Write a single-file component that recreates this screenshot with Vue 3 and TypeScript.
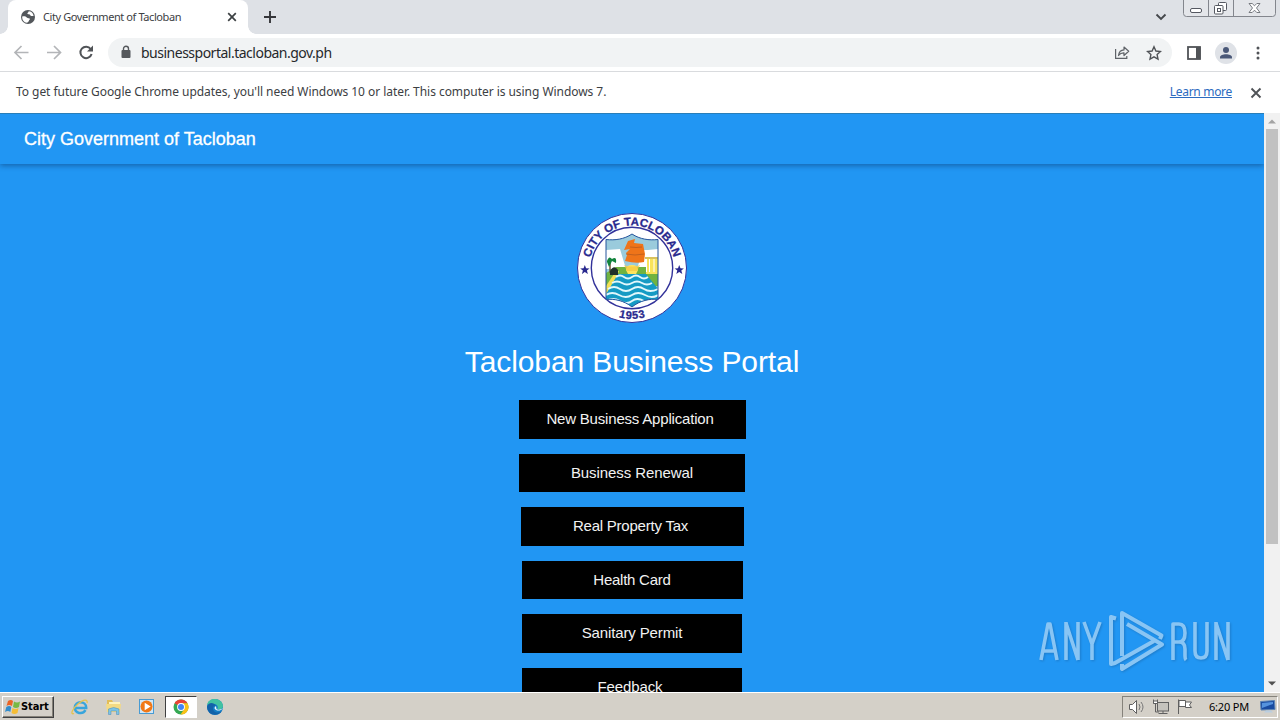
<script setup lang="ts">
interface PortalLink {
  label: string
  width: number
  shift: number
  spacing: number
}

const links: PortalLink[] = [
  { label: 'New Business Application', width: 227, shift: -4, spacing: -0.19 },
  { label: 'Business Renewal', width: 226, shift: 0, spacing: -0.08 },
  { label: 'Real Property Tax', width: 223, shift: -3, spacing: -0.22 },
  { label: 'Health Card', width: 221, shift: 0, spacing: -0.25 },
  { label: 'Sanitary Permit', width: 220, shift: 0, spacing: -0.12 },
  { label: 'Feedback', width: 220, shift: -4, spacing: -0.12 },
]
</script>

<template>
  <div class="screen">
    <div class="tabstrip">
      <div class="tab">
        <svg class="globe" width="16" height="16" viewBox="0 0 16 16">
          <circle cx="8" cy="8" r="7" fill="#53575b" />
          <path d="M2.200 7.500C4 6.800 5.800 7.200 6.800 8.400c.9 1 2.400.3 3 1.400.4 1-.7 1.200-1 2.200-.2.8-1 1.600-2 1.800C4 13.500 2 11 2.200 7.500zM8.600 2.300c.3.900-.8 1.200-1.200 1.900-.4.800.8 1.100 1.700 1.100 1 0 .9 1.400 2 1.700.9.200 1.600-.4 2.500.1C13.300 4.300 11.200 2.300 8.600 2.300z" fill="#fff" />
        </svg>
        <span class="tab-title">City Government of Tacloban</span>
        <svg class="tab-close" width="10" height="10" viewBox="0 0 10 10"><path d="M1.200 1.200l7.600 7.600M8.800 1.200L1.200 8.800" stroke="#3c4043" stroke-width="1.700" /></svg>
      </div>
      <svg class="plus" width="14" height="14" viewBox="0 0 14 14"><path d="M7 1v12M1 7h12" stroke="#35363a" stroke-width="1.900" /></svg>
      <svg class="chevron" width="12" height="8" viewBox="0 0 12 8"><path d="M1.500 1.500L6 6l4.500-4.500" fill="none" stroke="#45484c" stroke-width="1.900" /></svg>
      <svg class="winctl" width="94" height="18" viewBox="0 0 94 18">
        <path d="M.5 0v13.500q0 3 3 3h86q3 0 3-3V0M25.500 0v16M50.500 0v16" fill="#e4e6ea" stroke="#83868d" />
        <rect x="7.500" y="8.500" width="11" height="4" rx="1.500" fill="#fff" stroke="#555861" />
        <rect x="35.500" y="2.500" width="8" height="8" rx="1" fill="#fff" stroke="#555861" />
        <rect x="31.500" y="5.500" width="8.500" height="8.500" rx="1" fill="#fff" stroke="#555861" />
        <rect x="34.500" y="8.500" width="3" height="3" fill="#fff" stroke="#555861" />
        <path d="M66 3.500h3.200l2.300 2.300 2.300-2.300H77L73.500 8l3.500 4.500h-3.200l-2.300-2.300-2.300 2.300H66L69.500 8z" fill="#fff" stroke="#6b6e75" stroke-width=".9" />
      </svg>
    </div>

    <div class="toolbar">
      <svg class="nav" width="100" height="20" viewBox="0 0 100 20" fill="none">
        <path d="M21.500 9.500H8.500M14.500 3L8 9.500l6.500 6.500" stroke="#b3b5b8" stroke-width="1.700" />
        <path d="M40 9.500h13M47 3l6.500 6.500-6.500 6.500" stroke="#b3b5b8" stroke-width="1.700" />
        <path d="M83.700 6A5.700 5.700 0 1 0 84.600 11" stroke="#505357" stroke-width="2" />
        <path d="M86 2.500v6h-6z" fill="#505357" />
      </svg>
      <div class="omnibox">
        <svg class="lock" width="10" height="14" viewBox="0 0 10 14"><rect x=".5" y="5" width="9" height="8" rx="1" fill="#55585c" /><path d="M2.500 5.500V3.700a2.500 2.500 0 0 1 5 0v1.800" fill="none" stroke="#55585c" stroke-width="1.400" /></svg>
        <span class="url">businessportal.tacloban.gov.ph</span>
        <svg class="share" width="16" height="16" viewBox="0 0 16 16" fill="none" stroke="#5f6368" stroke-width="1.200"><path d="M1.600 4v9.400h11.200V11" /><path d="M4.500 10.500C5 7 7.200 5 10 4.900V2l4.700 4.300L10 10.500V7.800C7.800 7.700 6 8.500 4.500 10.500z" stroke-linejoin="round" /></svg>
        <svg class="star" width="16" height="16" viewBox="0 0 16 16"><path d="M8 1.800l1.900 4.200 4.600.5-3.400 3.100.9 4.500-4-2.300-4 2.300.9-4.500L1.500 6.500 6.100 6z" fill="none" stroke="#505357" stroke-width="1.400" /></svg>
      </div>
      <svg class="panel" width="14" height="14" viewBox="0 0 14 14"><rect x="1" y="1" width="12" height="12" fill="#fff" stroke="#505357" stroke-width="1.800" /><path d="M9 1h4.500v12H9z" fill="#505357" /></svg>
      <svg class="avatar" width="22" height="22" viewBox="0 0 22 22"><circle cx="11" cy="11" r="11" fill="#dfe2e7" /><circle cx="11" cy="8" r="3" fill="#4a5878" /><path d="M5 16.500v-1.200c0-4 12-4 12 0v1.200z" fill="#4a5878" /></svg>
      <svg class="kebab" width="4" height="14" viewBox="0 0 4 14" fill="#505357"><circle cx="2" cy="2" r="1.500" /><circle cx="2" cy="7" r="1.500" /><circle cx="2" cy="12" r="1.500" /></svg>
    </div>

    <div class="infobar">
      <span class="info-text">To get future Google Chrome updates, you'll need Windows 10 or later. This computer is using Windows 7.</span>
      <span class="learn">Learn more</span>
      <svg class="info-close" width="12" height="12" viewBox="0 0 12 12"><path d="M1.500 1.500l9 9M10.500 1.500l-9 9" stroke="#505357" stroke-width="1.900" /></svg>
    </div>

    <div class="viewport">
      <div class="page">
        <header class="site-header"><span>City Government of Tacloban</span></header>
        <main class="content">
          <svg class="seal" width="112" height="112" viewBox="0 0 112 112">
            <defs>
              <path id="arcTop" d="M14.620 67.090A42.800 42.800 0 1 1 97.380 67.090" />
              <path id="arcBottom" d="M5 56a51 51 0 0 0 102 0" />
              <clipPath id="shield"><path d="M30 27.500c9 1 18-.2 26-5.500 8 5.300 17 6.500 26 5.500v60c-8-1-18 1-26 7.500-8-6.500-18-8.500-26-7.500z" /></clipPath>
            </defs>
            <circle cx="56" cy="56" r="54.500" fill="#fff" stroke="#32329a" />
            <circle cx="56" cy="56" r="40.700" fill="#fff" stroke="#32329a" stroke-width="1.400" />
            <g clip-path="url(#shield)">
              <path d="M29 21h54v75H29z" fill="#9acbdc" />
              <path d="M30 38l14-1 6 20H30zM82 37l-10 1h-5l-6 19h21z" fill="#fff" />
              <path d="M30 61l10-6h33l9 6v13H30z" fill="#70b340" />
              <path d="M30 88V74l10-15h3L32 88z" fill="#f2df55" />
              <path d="M42 62h28l13 16v18H29V84z" fill="#159bc4" />
              <g fill="none" stroke="#e2f8fc" stroke-width="1.900">
                <path d="M40 65q4-3 8 0t8 0 8 0 8 0" /><path d="M36 71q5-3 10 0t10 0 10 0 10 0" />
                <path d="M32 77q6-4 12 0t12 0 12 0 14 0" /><path d="M30 83q6-4 13 0t13 0 13 0 13 0" />
                <path d="M30 89q7-4 14 0t12 0 12 0 14 0" />
              </g>
              <path d="M50 58q0-5 6-5t6 5l-2 4h-8z" fill="#ffe45c" /><path d="M48 53l3 6h10l3-6q-8 3-16 0z" fill="#f6c73f" opacity=".7" />
              <path d="M52 29l7-2-1 4 9 1 2 10-1 8q-8 2-19-1l2-6-1-2 4-4-6 1z" fill="#ef7419" />
              <path d="M50 42q9 2 18 0M54 35q6 1 12 0" fill="none" stroke="#b75a20" stroke-width=".8" />
              <path d="M34 61V50" stroke="#705535" stroke-width="1.500" /><path d="M31 49q2-6 5-2 5-3 4 4l-4-2-3 6-2-5z" fill="#13843e" />
              <path d="M34 63v-4q4-7 8-1v5z" fill="#203029" />
              <path d="M70 46h12v16H70z" fill="#f8e35b" /><path d="M70.500 46v14M73.500 46v14M78 46v14" stroke="#fff" /><path d="M69 47h13v-2H69z" fill="#d8c25d" />
            </g>
            <path d="M30 27.500c9 1 18-.2 26-5.500 8 5.300 17 6.500 26 5.500v60c-8-1-18 1-26 7.500-8-6.500-18-8.500-26-7.500z" fill="none" stroke="#24549c" />
            <g fill="#29298e">
              <path d="M8.800 53l1.300 3.200 3.400.2-2.600 2.200 1 3.300-3.100-1.800-2.900 1.800 1-3.300-2.700-2.200 3.400-.2zM103.200 53l1.300 3.200 3.400.2-2.600 2.200 1 3.300-3.100-1.800-2.900 1.800 1-3.300-2.700-2.200 3.400-.2z" />
              <text class="seal-text"><textPath href="#arcTop" startOffset="50%" text-anchor="middle" textLength="113">CITY OF TACLOBAN</textPath></text>
              <text class="seal-text year"><textPath href="#arcBottom" startOffset="50%" text-anchor="middle" textLength="27">1953</textPath></text>
            </g>
          </svg>
          <h1 class="title">Tacloban Business Portal</h1>
          <nav class="links">
            <a v-for="link in links" :key="link.label" class="link" :style="{ width: link.width + 'px' }">
              <span :style="{ marginLeft: link.shift + 'px', letterSpacing: link.spacing + 'px' }">{{ link.label }}</span>
            </a>
          </nav>
        </main>
      </div>
      <div class="scrollbar">
        <svg width="16" height="16" viewBox="0 0 16 16"><path d="M4 10.500l4-4 4 4z" fill="#a3a3a3" /></svg>
        <div class="thumb"></div>
        <svg width="16" height="17" viewBox="0 0 16 17"><path d="M4 6.500l4 4 4-4z" fill="#505050" /></svg>
      </div>
      <svg class="watermark" width="204" height="72" viewBox="0 0 204 72" fill="none">
        <g stroke-linejoin="round" stroke-width="3.600">
          <path d="M8 55l7-36h2l7 36M10.500 46h11M33 55V17M33 18l12 37M45 17v38M51 17l8 22 8-22M59 38v17" />
          <path d="M140 55V19h6q6 0 6 9t-6 9h-6M146 37q6 0 6 7v7q0 3 1 4M162 17v29q0 7 6 7t6-7V17M183 55V17M183 18l12 37M195 17v38" />
          <path d="M83 13.500L78 12v47l4-1 39-22" stroke-width="4" />
          <path d="M89 51V8l39.500 22.500L127 34" stroke-width="4" />
          <path d="M94 19l35 20.500L89 64v-5" stroke-width="4" />
        </g>
      </svg>
    </div>

    <div class="taskbar">
      <div class="start">
        <svg width="17" height="16" viewBox="0 0 17 16"><path d="M4 2q3-2 5 0L8 7Q5 5 2.500 7z" fill="#eb6424" /><path d="M10 2.500q3 2 6 0L15 8q-3 2-6 0z" fill="#78b943" /><path d="M2.300 8q3-2 5 0l-1 5Q4 11 1 13z" fill="#328dcc" /><path d="M8.500 9q3 2 6 0l-1 5q-3 2-6 0z" fill="#f5bd34" /></svg>
        <span>Start</span>
      </div>
      <svg class="task ie" width="18" height="18" viewBox="0 0 18 18" fill="none"><path d="M14.500 12.200C11.500 17 3.800 15.500 3.800 9.600c0-7 11.400-7 11.400 0v.3H5" stroke="#38a5dc" stroke-width="2.500" /><path d="M3 15.500C-1 17 1 11 7 6s10-5 9-1" stroke="#e5c34f" stroke-width="1.300" /></svg>
      <svg class="task explorer" width="18" height="18" viewBox="0 0 18 18"><path d="M2 2h5l1 2h7v9H2z" fill="#e2bd58" /><path d="M4 4h11v7H4z" fill="#fff3bd" /><path d="M1 6h15l-1 8H2z" fill="#f4da83" /><path d="M3.500 16.500V11q5-3 10.500 0v5.500h-2.500V13H6v3.500z" fill="#7cc4e6" stroke="#4b8bb5" stroke-width=".5" /></svg>
      <svg class="task media" width="18" height="18" viewBox="0 0 18 18"><rect x="1.500" y="1.500" width="14" height="14" fill="#d2e7f5" stroke="#489bd3" /><circle cx="8.500" cy="8.500" r="6" fill="#f17816" /><path d="M6.700 4.800l6 3.700-6 3.700z" fill="#fff" /></svg>
      <div class="active-task">
        <svg width="16" height="16" viewBox="0 0 16 16"><circle cx="8" cy="8" r="7.500" fill="#35a853" /><path d="M8 8L1.500 4.200A7.500 7.500 0 0 1 14.500 4.200H8z" fill="#e94335" /><path d="M8 4.200h6.500A7.500 7.500 0 0 1 7.500 15.500L11.300 10z" fill="#fbc116" /><circle cx="8" cy="8" r="3.900" fill="#fff" /><circle cx="8" cy="8" r="3" fill="#4285f4" /></svg>
      </div>
      <svg class="task edge" width="18" height="18" viewBox="0 0 18 18"><circle cx="9" cy="9" r="8" fill="#147dc5" /><path d="M1.200 7C2-1 16-1 17 8c0 3-3 4-6 3 2-2 0-5-3-5S3 6 1.200 7z" fill="#41c2a2" /><path d="M1 9c1-5 7-5 9-1-3-1-4 3-2 5s5 2 8 0c-3 5-14 6-15-4z" fill="#1262a9" /><path d="M10 8c-2 1-2 3 0 4s5 1 7-2c-2 2-6 2-6.500 1z" fill="#e8f7ff" /></svg>
      <div class="tray">
        <svg width="68" height="18" viewBox="0 0 68 18" fill="#fff" stroke="#606060" stroke-width="1">
          <path d="M1.500 6.500h3l4-4v13l-4-4h-3z" /><path d="M11 6q2 3 0 6M13 4q4 5 0 10" fill="none" stroke="#777" />
          <rect x="29.500" y="4.500" width="11" height="8.500" fill="#c5c3bd" /><path d="M35 13v2.500M30.500 15.500h9" fill="none" /><path d="M25.500 1.500v4h4v-4M27.500 6v8H31" fill="none" /><path d="M25.500 3h4v2.500h-4z" />
          <path d="M50.500 16V1.500M51 2.500h6.500v1.500h6l-2 3 2 2.500h-6V8.500H51z" /><path d="M57.500 3v6" />
        </svg>
        <span class="time">6:20 PM</span>
        <svg class="desktop" width="18" height="15" viewBox="0 0 18 15"><path d="M1.500 2.500l14-1 .5 9-14 .5z" fill="#194ba0" stroke="#5e86b5" /><path d="M3 4l11-1v2L3 9z" fill="#5593dd" /><path d="M7 11.500h5l2 2H5z" fill="#b8cde1" /></svg>
      </div>
    </div>
  </div>
</template>

<style>
body { margin: 0; overflow: hidden; }
</style>

<style scoped>
.screen { width: 1280px; height: 720px; overflow: hidden; display: flex; flex-direction: column; font-family: "Noto Sans", "DejaVu Sans", sans-serif; background: #fff; color: #3c4043; }
.screen * { box-sizing: border-box; }
svg { display: block; flex: none; }
span { white-space: nowrap; }
.tabstrip { height: 34px; flex: none; background: #dee1e6; display: flex; }
.tab { width: 240px; height: 34px; margin-left: 8px; background: #fff; border-radius: 8px 8px 0 0; display: flex; align-items: center; position: relative; }
.tab::before, .tab::after { content: ""; position: absolute; bottom: 0; width: 8px; height: 8px; }
.tab::before { left: -8px; background: radial-gradient(circle at 0 0, transparent 7.500px, #fff 8px); }
.tab::after { right: -8px; background: radial-gradient(circle at 100% 0, transparent 7.500px, #fff 8px); }
.globe { margin-left: 12px; }
.tab-title { margin-left: 7px; margin-top: -1px; width: 138px; font-size: 11px; letter-spacing: -0.41px; }
.tab-close { margin-left: 46px; }
.plus { margin: 10px 0 0 15px; }
.chevron { margin: 13px 0 0 auto; }
.winctl { margin-left: 16px; margin-right: 3px; }
.toolbar { height: 38px; flex: none; display: flex; align-items: center; border-bottom: 1px solid #d9dbde; }
.nav { margin-left: 7px; margin-right: 1px; }
.omnibox { width: 1064px; height: 29px; border-radius: 15px; background: #f1f3f4; display: flex; align-items: center; }
.lock { margin-left: 13px; margin-top: -2px; }
.url { margin-left: 10px; font-size: 14px; letter-spacing: -0.5px; color: #26282b; }
.share { margin-left: auto; }
.star { margin: 0 10px 0 16px; }
.panel { margin-left: 15px; }
.avatar { margin-left: 14px; }
.kebab { margin-left: 19px; }
.infobar { height: 41px; flex: none; display: flex; align-items: center; padding: 0 18px 2px 16px; font-size: 12px; }
.info-text { letter-spacing: -0.05px; }
.learn { margin-left: auto; color: #2c6bc0; text-decoration: underline; letter-spacing: -0.3px; }
.info-close { margin-left: 18px; margin-top: 2px; }
.viewport { height: 579px; flex: none; display: flex; overflow: hidden; position: relative; font-family: "Liberation Sans", Arial, sans-serif; }
.page { width: 1264px; height: 579px; background: #2196f3; overflow: hidden; }
.site-header { height: 51px; border-top: 1px solid #287eb9; display: flex; align-items: center; padding-left: 24px; color: #fff; font-size: 18px; -webkit-text-stroke: 0.3px #fff; box-shadow: 0 2px 5px rgba(0, 30, 70, 0.38); }
.content { display: flex; flex-direction: column; align-items: center; padding-top: 48px; color: #fff; }
.seal-text { font: bold 11.5px "Liberation Sans", Arial, sans-serif; stroke: #29298e; stroke-width: 0.3px; }
.year { font-size: 11px; }
.title { margin: 20px 0 0; font-size: 30px; line-height: 36px; font-weight: 400; letter-spacing: -0.1px; white-space: nowrap; }
.links { margin-top: 20px; display: flex; flex-direction: column; align-items: center; gap: 15px; }
.link { height: 38.500px; padding-bottom: 1px; background: #000; display: flex; align-items: center; justify-content: center; color: #f2f2f2; font-size: 15px; }
.scrollbar { width: 16px; height: 579px; background: #f1f1f1; display: flex; flex-direction: column; align-items: center; }
.thumb { width: 12px; height: 415px; background: #c1c1c1; margin-bottom: auto; }
.watermark { position: absolute; left: 1033px; top: 492px; opacity: 0.58; stroke: #d4e8f6; filter: drop-shadow(1px 1px 1px rgba(20, 70, 120, 0.55)); }
.taskbar { height: 28px; flex: none; border-top: 1px solid #fff; background: #d4d0c8; display: flex; align-items: center; color: #000; }
.start { width: 52px; height: 22px; margin-left: 2px; border: 1px solid; border-color: #fff #404040 #404040 #fff; box-shadow: inset -1px -1px #858178; display: flex; align-items: center; padding-left: 1px; font: bold 11px "DejaVu Sans Condensed", "DejaVu Sans", sans-serif; }
.start span { letter-spacing: -0.1px; }
.ie { margin-left: 17px; }
.explorer { margin-left: 16px; }
.media { margin-left: 15px; }
.active-task { width: 32px; height: 22px; margin-left: 9px; background: #fff; border: 1px solid; border-color: #404040 #fff #fff #404040; display: flex; align-items: center; justify-content: center; }
.edge { margin-left: 9px; }
.tray { width: 156px; height: 22px; margin-left: auto; margin-right: 2px; border: 1px solid; border-color: #85827b #fff #fff #85827b; display: flex; align-items: center; padding-left: 5px; }
.time { margin-left: 13px; width: 41px; font-size: 11px; letter-spacing: -0.2px; }
.desktop { margin-left: 10px; }
</style>
